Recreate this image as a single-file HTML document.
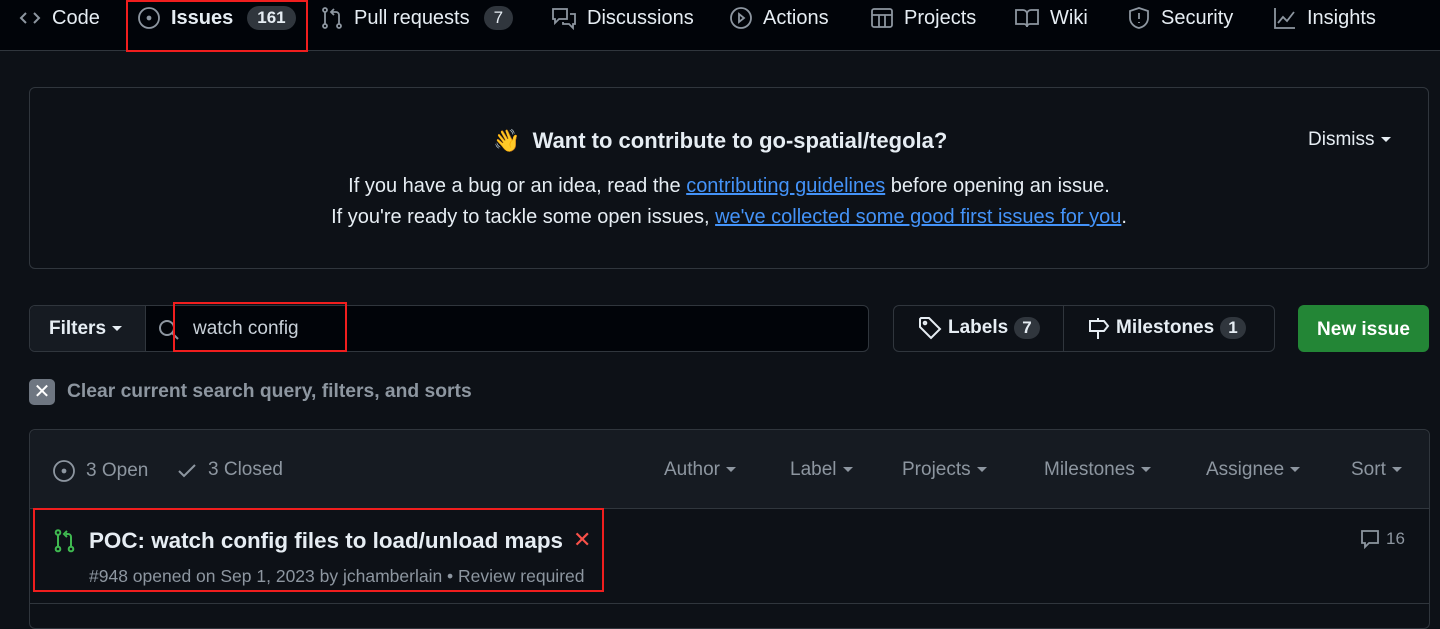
<!DOCTYPE html>
<html><head><meta charset="utf-8"><style>
*{box-sizing:border-box;margin:0;padding:0}
body{width:1440px;height:616px;overflow:hidden;background:#0d1117;font-family:"Liberation Sans",sans-serif;color:#e6edf3;position:relative}
.a{position:absolute;white-space:nowrap}
.nav{position:absolute;left:0;top:0;width:1440px;height:51px;background:#010409;border-bottom:1px solid #30363d}
.nav .a{top:6px;font-size:20px;color:#e6edf3;display:flex;align-items:center;gap:10px}
svg{display:block}
.cnt{background:#30363d;border-radius:14px;padding:2px 10px;font-size:17px}
.red{position:absolute;border:2px solid #f01e1e}
.muted{color:#8d96a0}
.link{color:#4493f8;text-decoration:underline}
.caret{display:inline-block;width:0;height:0;border-left:5px solid transparent;border-right:5px solid transparent;border-top:5px solid currentColor;margin-left:6px;vertical-align:middle}
</style></head><body>
<div class="nav">
 <div class="a" style="left:18px"><svg width="24" height="24" viewBox="0 0 24 24" fill="none" stroke="#8d96a0" stroke-width="2"><path d="M8 7l-5 5 5 5M16 7l5 5-5 5"/></svg>Code</div>
 <div class="a" style="left:137px;font-weight:bold"><svg width="24" height="24" viewBox="0 0 24 24" fill="none" stroke="#8d96a0" stroke-width="1.8"><circle cx="12" cy="12" r="10"/><circle cx="12" cy="12" r="1.5" fill="#8d96a0"/></svg>Issues<span class="cnt" style="margin-left:4px">161</span></div>
 <div class="a" style="left:320px"><svg width="24" height="24" viewBox="0 0 24 24" fill="none" stroke="#8d96a0" stroke-width="1.8"><circle cx="5" cy="4" r="2"/><circle cx="5" cy="20" r="2"/><circle cx="19" cy="20" r="2"/><path d="M5 6v12M19 18V9a3 3 0 0 0-3-3h-4M14 3l-3 3 3 3"/></svg>Pull requests<span class="cnt" style="margin-left:4px">7</span></div>
 <div class="a" style="left:551px"><svg width="26" height="24" viewBox="0 0 26 24" fill="none" stroke="#8d96a0" stroke-width="1.8"><path d="M2 3h14v10H8l-4 4v-4H2zM19 8h5v10h-2v4l-4-4h-6v-2"/></svg>Discussions</div>
 <div class="a" style="left:729px"><svg width="24" height="24" viewBox="0 0 24 24" fill="none" stroke="#8d96a0" stroke-width="1.8"><circle cx="12" cy="12" r="10"/><path d="M10 8l5 4-5 4z"/></svg>Actions</div>
 <div class="a" style="left:870px"><svg width="24" height="24" viewBox="0 0 24 24" fill="none" stroke="#8d96a0" stroke-width="1.8"><rect x="2" y="3" width="20" height="18" rx="2"/><path d="M2 9h20M9 9v12M15 9v12"/></svg>Projects</div>
 <div class="a" style="left:1014px"><svg width="26" height="24" viewBox="0 0 26 24" fill="none" stroke="#8d96a0" stroke-width="1.8"><path d="M2 4h7a4 4 0 0 1 4 4v13a3 3 0 0 0-3-3H2zM24 4h-7a4 4 0 0 0-4 4v13a3 3 0 0 1 3-3h8z"/></svg>Wiki</div>
 <div class="a" style="left:1127px"><svg width="24" height="24" viewBox="0 0 24 24" fill="none" stroke="#8d96a0" stroke-width="1.8"><path d="M12 2l9 3v7c0 5-4 9-9 10-5-1-9-5-9-10V5z"/><path d="M12 7v6M12 16v1"/></svg>Security</div>
 <div class="a" style="left:1273px"><svg width="24" height="24" viewBox="0 0 24 24" fill="none" stroke="#8d96a0" stroke-width="1.8"><path d="M2 2v20h20M5 17l5-6 4 4 7-9"/></svg>Insights</div>
</div>
<div class="red" style="left:126px;top:0;width:182px;height:52px"></div>

<div class="a" style="left:29px;top:87px;width:1400px;height:182px;border:1px solid #30363d;border-radius:6px"></div>
<div class="a" style="left:493px;top:128px;font-size:22px;font-weight:bold">👋&nbsp; Want to contribute to go-spatial/tegola?</div>
<div class="a" style="left:1308px;top:129px;font-size:19px">Dismiss<span class="caret"></span></div>
<div class="a" style="left:0;width:1458px;text-align:center;top:175px;font-size:20px">If you have a bug or an idea, read the <span class="link">contributing guidelines</span> before opening an issue.</div>
<div class="a" style="left:0;width:1458px;text-align:center;top:206px;font-size:20px">If you're ready to tackle some open issues, <span class="link">we've collected some good first issues for you</span>.</div>

<div class="a" style="left:29px;top:305px;width:840px;height:47px;border:1px solid #30363d;border-radius:6px;background:#010409;overflow:hidden">
 <div style="position:absolute;left:0;top:0;width:116px;height:100%;background:#161b22;border-right:1px solid #30363d;font-size:19px;font-weight:bold;padding:12px 0 0 19px">Filters<span class="caret"></span></div>
 <svg style="position:absolute;left:128px;top:13px" width="22" height="22" viewBox="0 0 22 22" fill="none" stroke="#8d96a0" stroke-width="2"><circle cx="9" cy="9" r="7"/><path d="M14 14l6 6"/></svg>
 <div style="position:absolute;left:163px;top:12px;font-size:19px;color:#c9d1d9">watch config</div>
</div>
<div class="red" style="left:173px;top:302px;width:174px;height:50px"></div>

<div class="a" style="left:893px;top:305px;width:382px;height:47px;border:1px solid #30363d;border-radius:6px"></div>
<div class="a" style="left:1063px;top:305px;width:1px;height:47px;background:#30363d"></div>
<div class="a" style="left:918px;top:316px;font-size:19px;font-weight:bold;display:flex;align-items:center;gap:6px"><svg width="24" height="24" viewBox="0 0 24 24" fill="none" stroke="#e6edf3" stroke-width="2"><path d="M2 3v8l11 11 9-9L11 2H3z"/><circle cx="7" cy="7" r="1.3"/></svg>Labels<span class="cnt" style="padding:1px 8px">7</span></div>
<div class="a" style="left:1086px;top:316px;font-size:19px;font-weight:bold;display:flex;align-items:center;gap:6px"><svg width="24" height="24" viewBox="0 0 24 24" fill="none" stroke="#e6edf3" stroke-width="2"><path d="M12 2v3M12 15v8M4 5h14l4 5-4 5H4z"/></svg>Milestones<span class="cnt" style="padding:1px 8px">1</span></div>
<div class="a" style="left:1298px;top:305px;width:131px;height:47px;background:#238636;border-radius:6px;font-size:19px;font-weight:bold;color:#fff;text-align:center;padding-top:14px">New issue</div>

<div class="a" style="left:29px;top:379px;width:26px;height:26px;background:#6e7681;border-radius:5px;color:#fff;font-size:20px;text-align:center;line-height:26px">✕</div>
<div class="a muted" style="left:67px;top:381px;font-size:19.3px;font-weight:bold">Clear current search query, filters, and sorts</div>

<div class="a" style="left:29px;top:429px;width:1401px;height:200px;border:1px solid #30363d;border-radius:6px"></div>
<div class="a" style="left:30px;top:430px;width:1399px;height:79px;background:#161b22;border-bottom:1px solid #30363d;border-radius:6px 6px 0 0"></div>
<div class="a muted" style="left:52px;top:459px;font-size:19px;display:flex;align-items:center;gap:10px"><svg width="24" height="24" viewBox="0 0 24 24" fill="none" stroke="#8d96a0" stroke-width="1.8"><circle cx="12" cy="12" r="10"/><circle cx="12" cy="12" r="1.5" fill="#8d96a0"/></svg>3 Open</div>
<div class="a muted" style="left:176px;top:459px;font-size:19px;display:flex;align-items:center;gap:10px"><svg width="22" height="22" viewBox="0 0 22 22" fill="none" stroke="#8d96a0" stroke-width="2"><path d="M3 12l5 5 11-11"/></svg>3 Closed</div>
<div class="a muted" style="left:664px;top:459px;font-size:19px">Author<span class="caret"></span></div>
<div class="a muted" style="left:790px;top:459px;font-size:19px">Label<span class="caret"></span></div>
<div class="a muted" style="left:902px;top:459px;font-size:19px">Projects<span class="caret"></span></div>
<div class="a muted" style="left:1044px;top:459px;font-size:19px">Milestones<span class="caret"></span></div>
<div class="a muted" style="left:1206px;top:459px;font-size:19px">Assignee<span class="caret"></span></div>
<div class="a muted" style="left:1351px;top:459px;font-size:19px">Sort<span class="caret"></span></div>

<svg class="a" style="left:54px;top:529px" width="22" height="24" viewBox="0 0 22 24" fill="none" stroke="#3fb950" stroke-width="2"><circle cx="4" cy="3.5" r="2.3"/><circle cx="4" cy="20" r="2.3"/><circle cx="17" cy="20" r="2.3"/><path d="M4 6v12M17 17.5V8a3 3 0 0 0-3-3h-2M13 2l-3 3 3 3"/></svg>
<div class="a" style="left:89px;top:528px;font-size:22.4px;font-weight:bold">POC: watch config files to load/unload maps</div>
<div class="a" style="left:573px;top:527px;font-size:22px;color:#f85149">✕</div>
<div class="a muted" style="left:89px;top:566px;font-size:17.5px">#948 opened on Sep 1, 2023 by jchamberlain • Review required</div>
<div class="red" style="left:33px;top:508px;width:571px;height:84px"></div>
<div class="a muted" style="left:1360px;top:529px;font-size:17px;display:flex;align-items:center;gap:6px"><svg width="20" height="20" viewBox="0 0 20 20" fill="none" stroke="#8d96a0" stroke-width="1.8"><path d="M2 2h16v12h-9l-4 4v-4H2z"/></svg>16</div>
<div class="a" style="left:30px;top:603px;width:1399px;height:1px;background:#30363d"></div>
</body></html>
